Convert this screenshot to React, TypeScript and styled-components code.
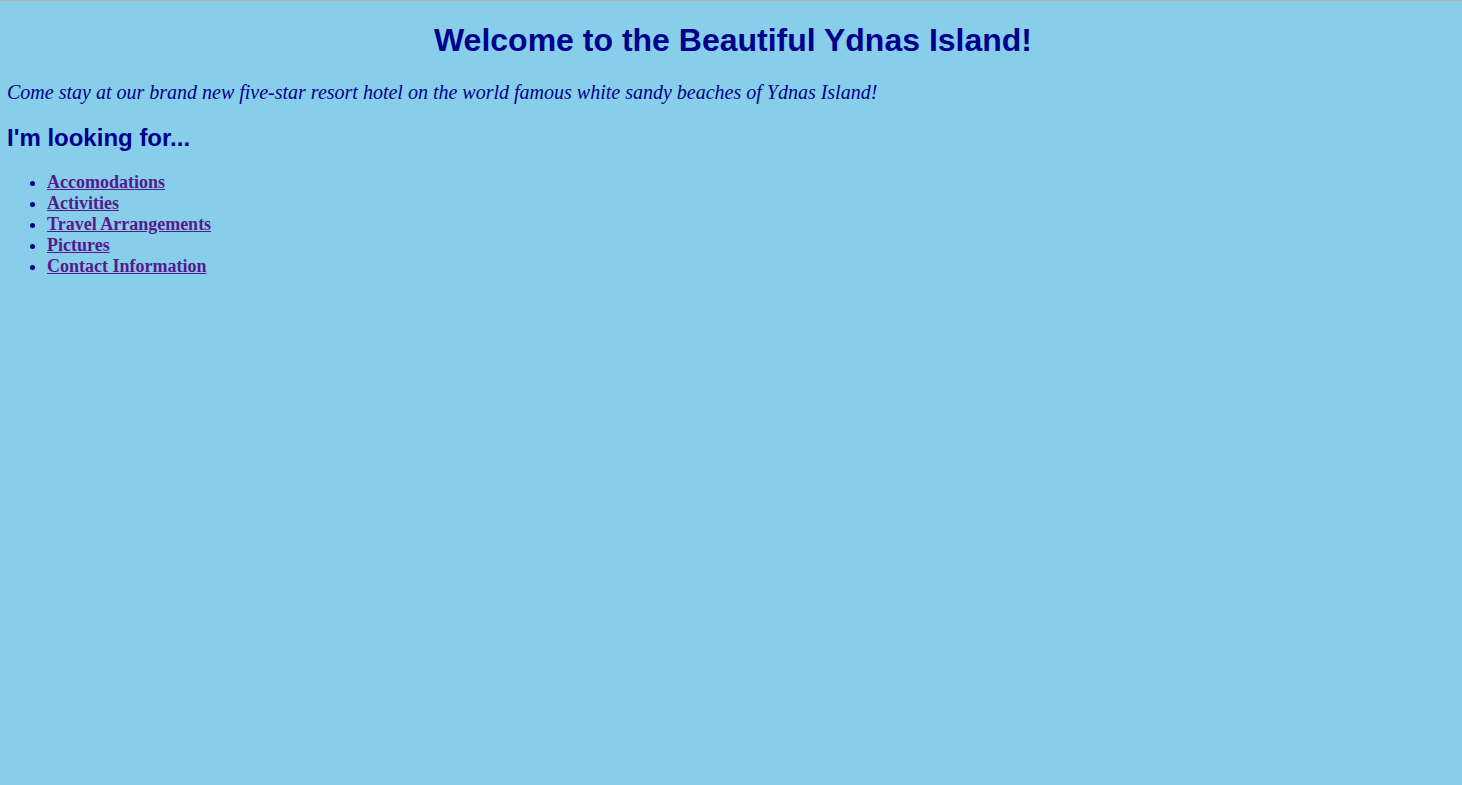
import styled, { createGlobalStyle } from "styled-components";

const GlobalStyle = createGlobalStyle`
  body {
    margin: 0;
    background: skyblue;
    color: darkblue;
    font-family: "Liberation Serif", "Times New Roman", serif;
    font-size: 18px;
  }
`;

const Page = styled.main`
  border-top: 1px solid #b6b4b6;
  padding: 21px 3px 20px 7px;
`;

const Title = styled.h1`
  margin: 0 0 22px;
  font: bold 32px/36px "Liberation Sans", Arial, sans-serif;
  text-align: center;
`;

const Intro = styled.p`
  margin: 0 0 20px;
  font-size: 20px;
  line-height: 24px;
  font-style: italic;
`;

const Subtitle = styled.h2`
  margin: 0 0 20px;
  font: bold 24px/28px "Liberation Sans", Arial, sans-serif;
`;

const LinkList = styled.ul`
  margin: 0;
  padding-left: 40px;
  line-height: 21px;
`;

const PageLink = styled.a`
  color: #551a8b;
  font-weight: bold;
`;

const links = [
  "Accomodations",
  "Activities",
  "Travel Arrangements",
  "Pictures",
  "Contact Information",
];

export default function App() {
  return (
    <>
      <GlobalStyle />
      <Page>
        <Title>Welcome to the Beautiful Ydnas Island!</Title>
        <Intro>
          Come stay at our brand new five-star resort hotel on the world famous
          white sandy beaches of Ydnas Island!
        </Intro>
        <Subtitle>I'm looking for...</Subtitle>
        <LinkList>
          {links.map((label) => (
            <li key={label}>
              <PageLink href="#">{label}</PageLink>
            </li>
          ))}
        </LinkList>
      </Page>
    </>
  );
}
